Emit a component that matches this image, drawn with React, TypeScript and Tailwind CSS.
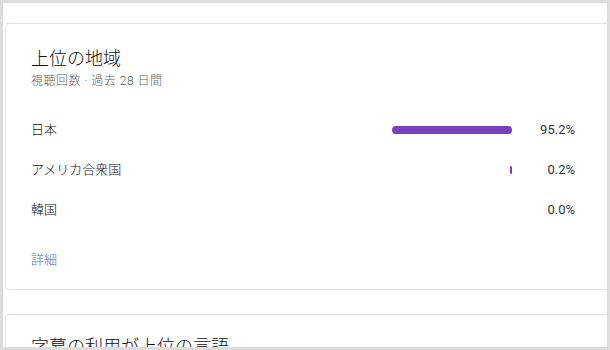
const regions = [
  { name: "日本", pct: 95.2 },
  { name: "アメリカ合衆国", pct: 0.2 },
  { name: "韓国", pct: 0.0 },
];

const MAX_BAR = 120;

function RegionRow({ name, pct }: { name: string; pct: number }) {
  const width = pct > 0 ? Math.max(2, Math.round((pct / 95.2) * MAX_BAR)) : 0;
  return (
    <div className="flex h-[40px] items-center">
      <div className="flex-1 text-[13px] font-light text-[#0f0f0f]">{name}</div>
      <div className="flex w-[126px] justify-end">
        {width > 0 && (
          <div
            className={`h-[8px] bg-[#7b3fbd] ${width > 4 ? "rounded-[4px]" : "rounded-[1px]"}`}
            style={{ width }}
          />
        )}
      </div>
      <div className="w-[63px] text-right text-[13px] text-[#333333]">{pct.toFixed(1)}%</div>
    </div>
  );
}

export default function App() {
  return (
    <div
      className="h-[350px] w-[610px] bg-[#dcdcdc] p-[3px]"
      style={{ fontFamily: "Roboto, 'Noto Sans CJK JP', sans-serif" }}
    >
      <div className="h-full w-full overflow-hidden bg-white pl-[2px] pt-[20px]">
        <section className="w-[620px] rounded-l-[4px] border border-r-0 border-[#e3e3e3] pb-[9px] pl-[25px] pr-[50px] pt-[23px]">
          <h2 className="text-[18px] font-light leading-[24px] text-[#0f0f0f]">上位の地域</h2>
          <p className="mt-[2px] text-[12px] font-light leading-[16px] tracking-[0.5px] text-[#606060]">
            視聴回数 · 過去 28 日間
          </p>
          <div className="mt-[21px]">
            {regions.map((r) => (
              <RegionRow key={r.name} {...r} />
            ))}
          </div>
          <div className="mt-[10px] flex h-[40px] items-center text-[13px] font-light text-[#3e6fd8]">詳細</div>
        </section>

        <section className="mt-[24px] h-[120px] w-[620px] rounded-l-[4px] border border-r-0 border-[#e3e3e3] pl-[25px] pt-[20px]">
          <h2 className="text-[18px] font-light leading-[24px] text-[#0f0f0f]">字幕の利用が上位の言語</h2>
        </section>
      </div>
    </div>
  );
}
